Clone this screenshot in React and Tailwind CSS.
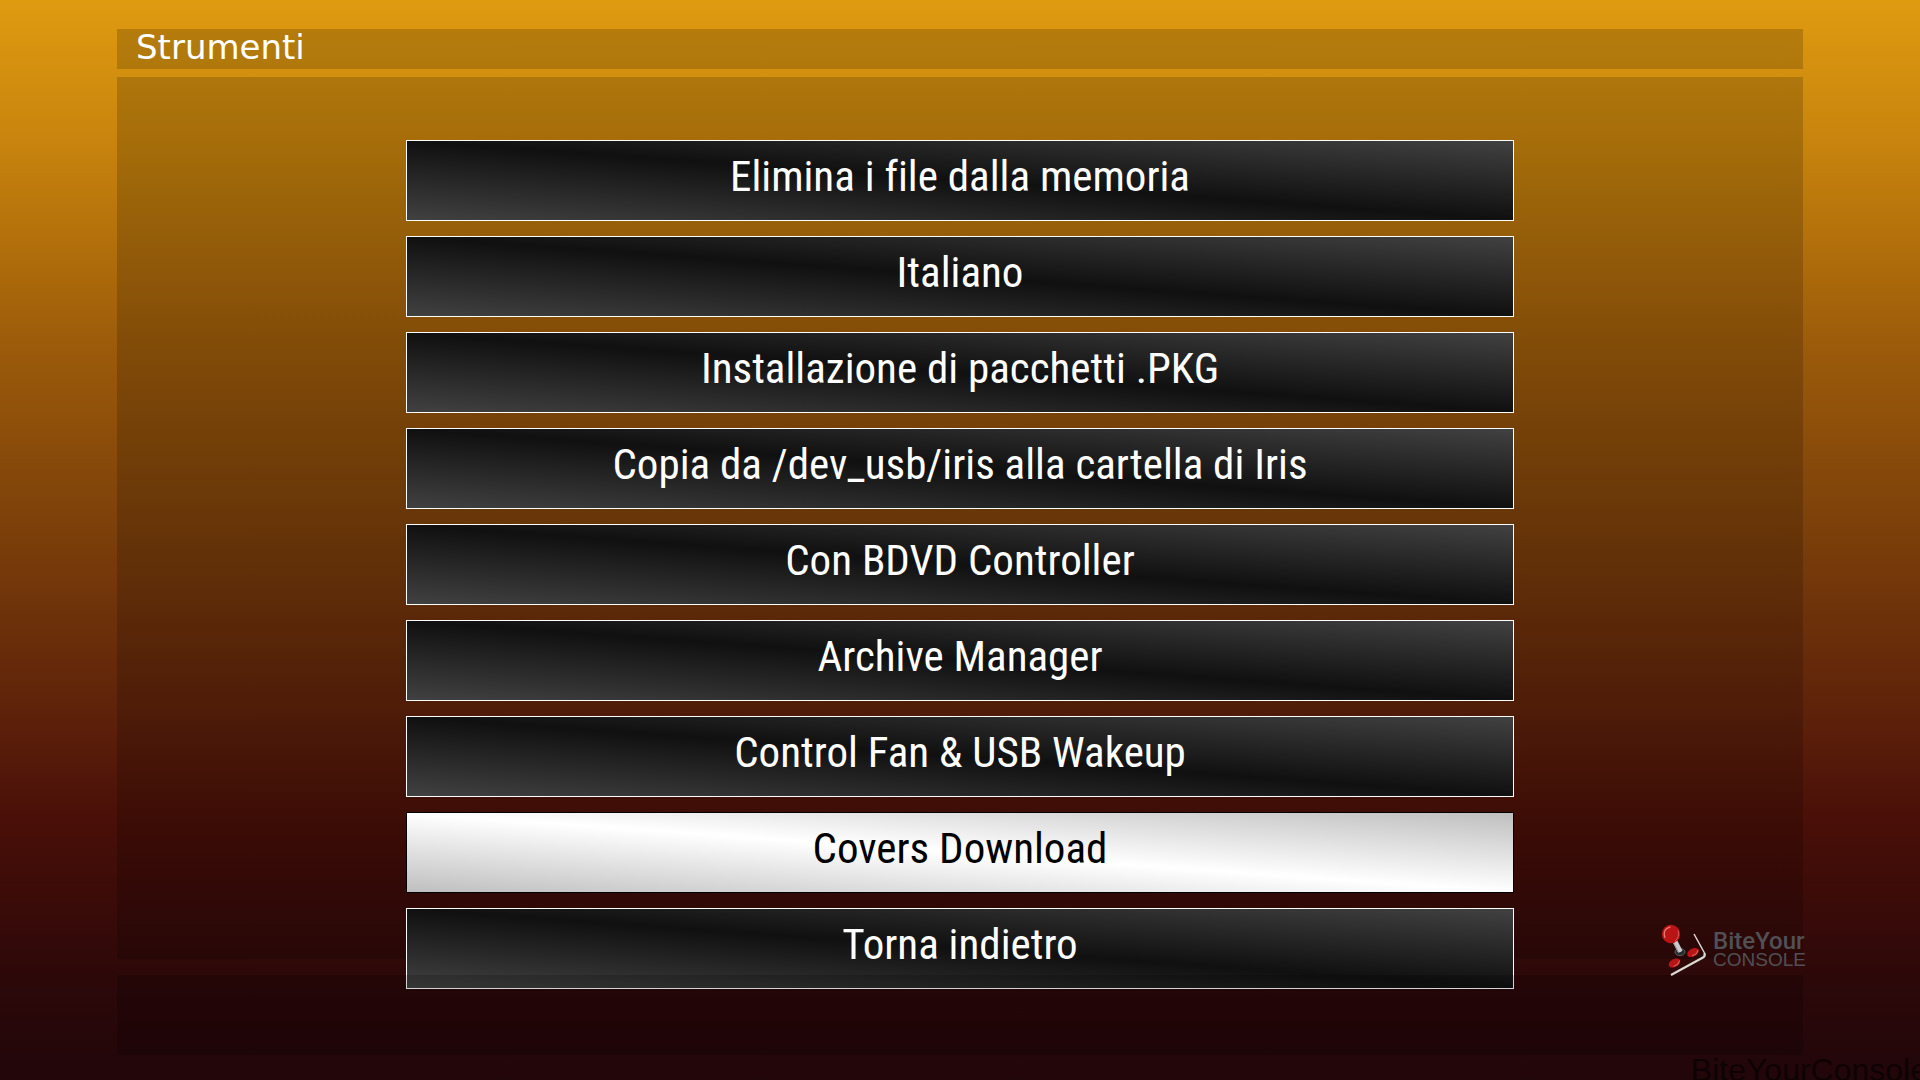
const ITEMS = [
  { label: 'Elimina i file dalla memoria' },
  { label: 'Italiano' },
  { label: 'Installazione di pacchetti .PKG' },
  { label: 'Copia da /dev_usb/iris alla cartella di Iris' },
  { label: 'Con BDVD Controller' },
  { label: 'Archive Manager' },
  { label: 'Control Fan & USB Wakeup' },
  { label: 'Covers Download', active: true },
  { label: 'Torna indietro' },
]

function MenuButton({ label, active }) {
  const look = active
    ? 'border-black text-black bg-[linear-gradient(to_top_right,#bfbfbf,#ffffff_50%,#bfbfbf)]'
    : 'border-white text-white bg-[linear-gradient(to_top_right,#414141,#101010_50%,#414141)]'

  return (
    <button
      type="button"
      className={`h-[81px] w-full shrink-0 border pb-2 text-center font-['Roboto_Condensed','Roboto',sans-serif] text-[43px] leading-none whitespace-nowrap [font-variant-ligatures:none] ${look}`}
    >
      {label}
    </button>
  )
}

function Joystick() {
  return (
    <svg viewBox="0 0 46 52" className="h-[52px] w-[46px] shrink-0" aria-hidden="true">
      <path d="M33 10 L43.500 29" fill="none" stroke="#dcd8d4" strokeWidth="1.500" />
      <path d="M43.500 29 Q44.500 32 42 33.500 L10 51" fill="none" stroke="#dcd8d4" strokeWidth="2.200" />
      <ellipse cx="19" cy="28" rx="5" ry="3.500" fill="#26292b" stroke="#5c6164" strokeWidth="1" />
      <path d="M11.500 18 L16 16 L21.500 26.500 Q19.500 29 17 28.500 Z" fill="#c9c9cb" />
      <path d="M12 18 L17.500 28.500" fill="none" stroke="#8d8d90" strokeWidth="1" />
      <circle cx="10" cy="10" r="9.200" fill="#b91515" />
      <path d="M4 14 Q1 5 9.500 2.800" fill="none" stroke="#e87878" strokeWidth="1.200" />
      <path d="M14 17 Q19 13 17 6.500" fill="none" stroke="#dd5a5a" strokeWidth="1" />
      <g fill="#b91515">
        <ellipse cx="32" cy="28.500" rx="6.200" ry="4" transform="rotate(-28 32 28.500)" />
        <ellipse cx="13.500" cy="39" rx="6.200" ry="4" transform="rotate(-28 13.500 39)" />
      </g>
      <path d="M31 32 Q37 30 37 26 M12.500 42.500 Q18.500 40.500 18.500 36.500" fill="none" stroke="#e46a6a" strokeWidth="1" />
    </svg>
  )
}

export default function App() {
  return (
    <div className="relative flex h-screen flex-col overflow-hidden bg-[linear-gradient(to_bottom,#df9b10,#c8840d_13%,#9c5b0a_32%,#7a3e0a_50%,#5c200a_67%,#490f08_76%,#2c0809_91%,#21060a)] px-[117px] pt-[29px] pb-[25px] font-['Liberation_Sans',sans-serif]">
      <header className="flex h-10 items-center bg-black/17 px-[19px]">
        <h1 className="pb-1 font-['DejaVu_Sans',sans-serif] text-[34px] leading-none text-white">Strumenti</h1>
      </header>

      <main className="mt-2 flex min-h-0 flex-1 flex-col items-center bg-black/17 pt-[63px]">
        <nav className="flex w-[65.7%] flex-col gap-[15px]">
          {ITEMS.map(item => (
            <MenuButton key={item.label} {...item} />
          ))}
        </nav>
      </main>

      {/* status strip, drawn over the end of the list */}
      <footer className="pointer-events-none relative mt-4 h-20 bg-black/17" />

      <div className="absolute right-[114px] bottom-[104px] flex items-center gap-1.5 text-[#505055]">
        <Joystick />
        <p>
          <span className="block font-['Roboto',sans-serif] text-[24px] leading-[20px] font-medium">BiteYour</span>
          <span className="block text-[19px] leading-[18px]">CONSOLE</span>
        </p>
      </div>

      <p className="absolute right-[-8px] bottom-[-8px] text-[32px] leading-[36px] whitespace-nowrap text-black/60">
        BiteYourConsole
      </p>
    </div>
  )
}
